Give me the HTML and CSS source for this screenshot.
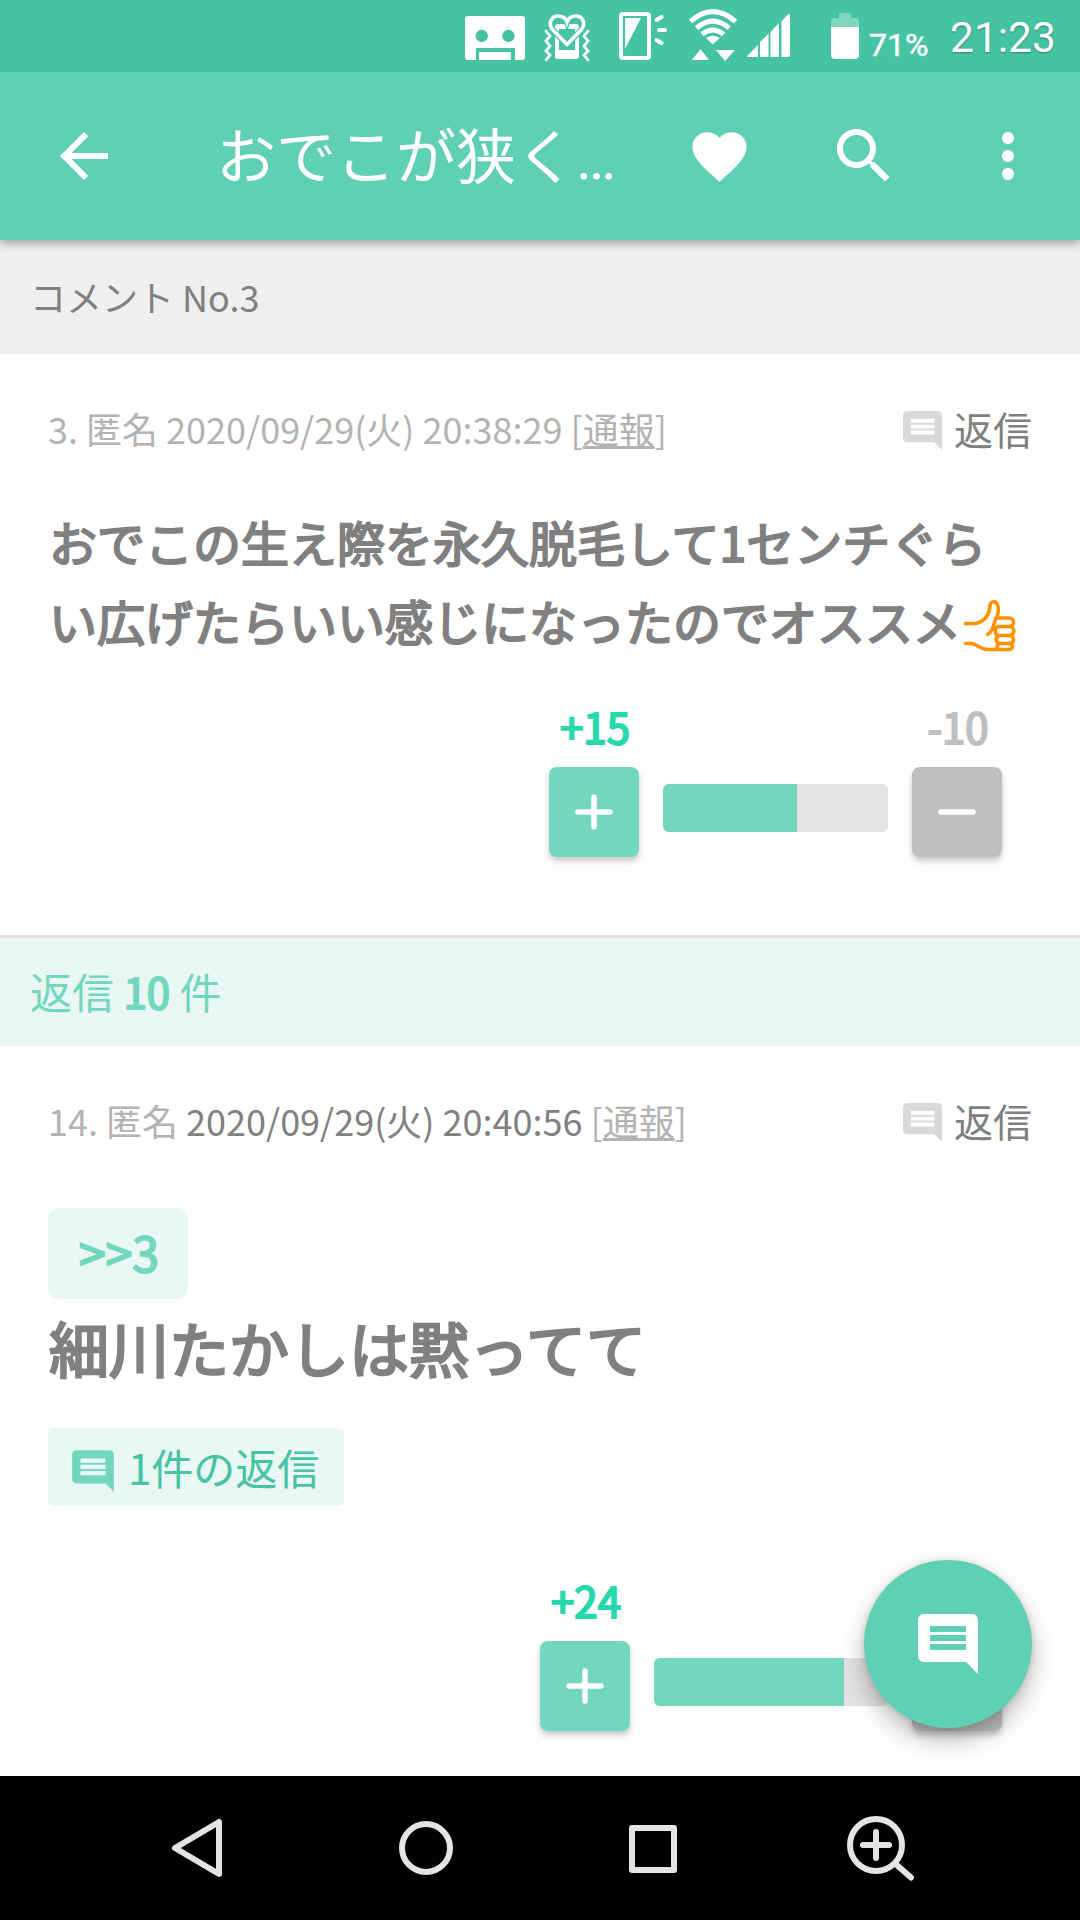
FILE: index.html
```html
<!DOCTYPE html>
<html lang="ja">
<head>
<meta charset="utf-8">
<title>コメント No.3</title>
<link rel="stylesheet" href="styles.css">
</head>
<body>
<svg class="defs" width="0" height="0">
  <symbol id="comment" viewBox="0 0 24 24"><path d="M21.99 4c0-1.1-.89-2-1.99-2H4c-1.1 0-2 .9-2 2v12c0 1.1.9 2 2 2h14l4 4-.01-18zM18 14H6v-2h12v2zm0-3H6V9h12v2zm0-3H6V6h12v2z"/></symbol>
  <symbol id="plus" viewBox="0 0 90 90"><path d="M29 45H61M45 30V60" stroke="#fff" stroke-width="5.500" stroke-linecap="round"/></symbol>
  <symbol id="minus" viewBox="0 0 90 90"><path d="M29 45H61" stroke="#fff" stroke-width="5.500" stroke-linecap="round"/></symbol>
</svg>
<div class="screen">
  <header class="status">
    <svg class="robot" width="60" height="46" viewBox="465 15 60 46"><path fill="#fff" fill-rule="evenodd" d="M468 16H522Q525 16 525 19V57Q525 60 522 60H515V48H476V60H468Q465 60 465 57V19Q465 16 468 16ZM481.700 29.800a6.200 6.200 0 1 0 .1 0ZM508.400 29.800a6.200 6.200 0 1 0 .1 0Z"/><path fill="#fff" d="M479 52H511V60H479Z"/></svg>
    <svg class="manner" width="48" height="50" viewBox="543 12 48 50"><rect x="555" y="24" width="24" height="35" rx="3" fill="#fff"/><path d="M559 29H575V50H559Z" fill="#46c3a2"/><path d="M567 44.500L553 30C547 23 552 16 558 16C563 16 566 19 567 22C568 19 571 16 576 16C582 16 587 23 581 30Z" fill="none" stroke="#46c3a2" stroke-width="6"/><path d="M567 44.500L553 30C547 23 552 16 558 16C563 16 566 19 567 22C568 19 571 16 576 16C582 16 587 23 581 30Z" fill="none" stroke="#fff" stroke-width="3.600"/><path d="M546 31L550 36L546 41L550 46L546 51L550 55L546 60M588 31L584 36L588 41L584 46L588 51L584 55L588 60" fill="none" stroke="#fff" stroke-width="2.800" stroke-linecap="round"/></svg>
    <svg class="flash" width="50" height="50" viewBox="618 11 50 50"><rect x="621" y="14" width="28" height="44" rx="2" fill="none" stroke="#fff" stroke-width="4"/><path d="M625 18H641L625 49Z" fill="#fff"/><path d="M656.500 20L661.500 17M659 30H665M656.500 40L661.500 43" stroke="#fff" stroke-width="4" stroke-linecap="round"/></svg>
    <svg class="wifi" width="48" height="54" viewBox="689 8 48 54"><path d="M712.800 44.500L706 38Q712.800 33.500 719.600 38Z" fill="#fff"/><g fill="none" stroke="#fff" stroke-width="5"><path d="M690.500 21.500Q712.800 1.800 735.500 21.500"/><path d="M696.500 28.200Q712.800 14.200 729.200 28.200"/><path d="M702 34.300Q712.800 25.700 723.800 34.300"/></g><path d="M692 60L700.500 49L709 60ZM716 50H735L725 61Z" fill="#fff"/></svg>
    <svg class="signal" width="44" height="46" viewBox="747 13 44 46"><path fill="#fff" d="M758 45V57H748Q746.500 57 748 55ZM760 42L768.500 33.500V57H760ZM770.500 32L779 23V57H770.500ZM781.500 21L788 14.500Q790 13 790 16V55Q790 57 788 57H781.500Z"/></svg>
    <svg class="battery" width="28" height="48" viewBox="831 12 28 48"><path fill="#7fd7c0" d="M840 13H850Q851 13 851 14V18H856Q859 18 859 21V28H831V21Q831 18 834 18H839V14Q839 13 840 13Z"/><path fill="#fff" d="M831 27H859V55Q859 59 855 59H835Q831 59 831 55Z"/></svg>
    <span class="percent">71%</span>
    <span class="clock">21:23</span>
  </header>
  <div class="appbar">
    <svg class="back" width="72" height="72" viewBox="0 0 24 24"><path d="M20 11H7.830l5.590-5.590L12 4l-8 8 8 8 1.410-1.410L7.830 13H20v-2z"/></svg>
    <h1 class="title">おでこが狭く<span class="dots">…</span></h1>
    <div class="action"><svg class="heart" width="65" height="65" viewBox="0 0 24 24"><path d="M12 21.350l-1.450-1.320C5.400 15.360 2 12.280 2 8.500 2 5.420 4.420 3 7.500 3c1.740 0 3.410.81 4.500 2.090C13.090 3.810 14.760 3 16.500 3 19.580 3 22 5.420 22 8.500c0 3.780-3.400 6.860-8.550 11.540L12 21.350z"/></svg></div>
    <div class="action"><svg width="72" height="72" viewBox="0 0 24 24"><path d="M15.500 14h-.79l-.28-.27C15.410 12.590 16 11.110 16 9.500 16 5.910 13.090 3 9.500 3S3 5.910 3 9.500 5.910 16 9.500 16c1.610 0 3.090-.59 4.230-1.570l.27.28v.79l5 4.990L20.490 19l-4.990-5zm-6 0C7.010 14 5 11.990 5 9.500S7.010 5 9.500 5 14 7.010 14 9.500 11.990 14 9.500 14z"/></svg></div>
    <div class="action"><svg width="72" height="72" viewBox="0 0 24 24"><path d="M12 8c1.100 0 2-.9 2-2s-.9-2-2-2-2 .9-2 2 .9 2 2 2zm0 2c-1.100 0-2 .9-2 2s.9 2 2 2 2-.9 2-2-.9-2-2-2zm0 6c-1.100 0-2 .9-2 2s.9 2 2 2 2-.9 2-2-.9-2-2-2z"/></svg></div>
  </div>
  <main class="content">
    <div class="band">コメント No.3</div>
    <article class="comment first">
      <div class="meta">
        <span>3. 匿名 2020/09/29(火) 20:38:29 [<u>通報</u>]</span>
        <span class="reply"><svg width="47" height="47"><use href="#comment"/></svg>返信</span>
      </div>
      <p class="body">おでこの生え際を永久脱毛して1センチぐら<br>い広げたらいい感じになったのでオススメ<svg class="thumb" width="54" height="54" viewBox="963 598 54 54"><g fill="none" stroke="#ff9100" stroke-width="3.500" stroke-linecap="round" stroke-linejoin="round"><path d="M965.500 623.500H975C984 622 989 616 990 606C990 601 996 600 998 606C999 611 998 615 996 618H1009C1015 618 1015 626 1009 626.500C1015.500 627 1015.500 635 1009 635.500C1015 636 1015 643 1009 643.500C1014 644 1013 649.500 1009 649.500H987C980 649.500 977 643.500 971 643.500H965.500"/><path d="M996 618C993 627 992 632 987.500 634.500M1009 626.500H999C994 627 994 635 999 635.500H1009M999 635.500C995 637 995 643 1000 643.500H1009M1000 643.500C996 644 996 649.500 1000 649.500"/></g></svg></p>
      <div class="votes">
        <div class="vote"><b class="up">+15</b><div class="btn green"><svg width="90" height="90"><use href="#plus"/></svg></div></div>
        <div class="bar short"><div class="fill" style="width:59.6%"></div></div>
        <div class="vote"><b class="down">-10</b><div class="btn grey"><svg width="90" height="90"><use href="#minus"/></svg></div></div>
      </div>
    </article>
    <div class="replies">返信 <b>10</b> 件</div>
    <article class="comment second">
      <div class="meta">
        <span>14. 匿名 <span class="dark">2020/09/29(火) 20:40:56</span> [<u>通報</u>]</span>
        <span class="reply"><svg width="47" height="47"><use href="#comment"/></svg>返信</span>
      </div>
      <div class="anchor">&gt;&gt;3</div>
      <p class="body large">細川たかしは黙ってて</p>
      <div class="thread"><svg width="50" height="50"><use href="#comment"/></svg><span>1件の返信</span></div>
      <div class="votes">
        <div class="vote"><b class="up">+24</b><div class="btn green"><svg width="90" height="90"><use href="#plus"/></svg></div></div>
        <div class="bar"><div class="fill" style="width:81.2%"></div></div>
        <div class="vote"><div class="btn grey"><svg width="90" height="90"><use href="#minus"/></svg></div></div>
      </div>
    </article>
  </main>
  <div class="fab"><svg width="72" height="72"><use href="#comment"/></svg></div>
  <nav class="nav">
    <svg width="1080" height="144" viewBox="0 1776 1080 144"><g fill="none" stroke="#e4e4e4" stroke-width="6" stroke-linejoin="round" stroke-linecap="round"><path d="M219 1822V1874L175 1848Z"/><circle cx="426" cy="1848" r="24"/><rect x="632" y="1828" width="42" height="42"/><circle cx="876" cy="1845" r="26"/><path d="M863 1845H889M876 1832V1858M895 1863.500L911 1877.500"/></g></svg>
  </nav>
</div>
</body>
</html>
```
FILE: styles.css
```css
* { box-sizing: border-box; }
body {
  margin: 0;
  background: #fff;
  font-family: "Noto Sans CJK JP", sans-serif;
  color: #808080;
}
.defs { position: absolute; }
svg { display: block; flex: none; }
.screen {
  position: relative;
  width: 1080px;
  height: 1920px;
  display: flex;
  flex-direction: column;
  overflow: hidden;
}
.status {
  position: relative;
  z-index: 2;
  height: 72px;
  flex: none;
  background: #46c3a2;
  display: flex;
  align-items: flex-start;
  padding-left: 465px;
  color: #fff;
  font-family: Roboto, sans-serif;
}
.robot { margin-top: 15px; }
.manner { margin: 12px 0 0 18px; }
.flash { margin: 11px 0 0 27px; }
.wifi { margin: 8px 0 0 21px; }
.signal { margin: 13px 0 0 10px; }
.battery { margin: 12px 0 0 40px; }
.percent {
  margin: 27px 0 0 10px;
  width: 62px;
  font-size: 32px;
  line-height: 36px;
  -webkit-text-stroke: .5px currentColor;
}
.clock {
  margin: 13px 0 0 19px;
  font-size: 42.5px;
  line-height: 50px;
  text-shadow: 0 1px 2px rgba(0, 0, 0, .35);
}
.appbar {
  position: relative;
  height: 168px;
  flex: none;
  background: #5fd0b5;
  display: flex;
  align-items: center;
  padding-left: 48px;
  box-shadow: 0 3px 10px rgba(0, 0, 0, .36);
  z-index: 1;
}
.appbar svg { fill: #fff; }
.title {
  margin: 0 0 0 96px;
  width: 432px;
  color: #fff;
  font-size: 60px;
  font-weight: 400;
  line-height: 84px;
  white-space: nowrap;
}
.dots { font-family: Roboto, sans-serif; }
.action { width: 144px; display: flex; justify-content: center; }
.heart { margin-right: 1px; }
.content { flex: 1; min-height: 0; overflow: hidden; }
.band {
  height: 114px;
  padding: 0 30px;
  background: #efefef;
  font-size: 36px;
  line-height: 112px;
}
.comment { padding: 48px 48px 0; }
.first { height: 584px; border-bottom: 3px solid #e3e3e3; }
.meta {
  height: 54px;
  display: flex;
  align-items: center;
  justify-content: space-between;
  color: #b3b3b3;
  font-size: 36px;
  line-height: 52px;
  white-space: nowrap;
}
.meta > span { height: 54px; }
.dark { color: #808080; }
.reply { display: flex; gap: 8px; color: #808080; font-size: 39px; }
.reply svg { fill: #d9d9d9; margin-top: 5px; }
.body {
  margin: 46px 0 0;
  padding-left: 1px;
  font-size: 48px;
  line-height: 79px;
  white-space: nowrap;
  -webkit-text-stroke: 2px currentColor;
}
.thumb { display: inline-block; margin-left: 2px; vertical-align: -11px; }
.votes {
  display: flex;
  align-items: flex-end;
  justify-content: flex-end;
  gap: 24px;
  margin-top: 35px;
  padding-right: 30px;
}
.vote { width: 90px; display: flex; flex-direction: column; align-items: center; gap: 12px; }
.vote b {
  height: 60px;
  padding-left: 2px;
  font-size: 42px;
  font-weight: 400;
  line-height: 62px;
  -webkit-text-stroke: 2px currentColor;
}
.up { color: #26d9ad; }
.down { color: #bfbfbf; }
.btn { width: 90px; height: 90px; border-radius: 8px; box-shadow: 0 4px 6px rgba(0, 0, 0, .22); }
.green, .fill { background: #73d7be; }
.grey { background: #bfbfbf; }
.bar {
  width: 234px;
  height: 48px;
  margin-bottom: 25px;
  border-radius: 6px;
  background: #e3e3e3;
  overflow: hidden;
}
.short { width: 225px; }
.fill { height: 100%; }
.replies {
  height: 108px;
  padding: 0 30px;
  background: #e9f8f5;
  color: #73d7be;
  font-size: 42px;
  line-height: 106px;
}
.replies b { font-weight: 400; -webkit-text-stroke: 2px currentColor; }
.anchor {
  width: 140px;
  height: 91px;
  margin-top: 60px;
  padding-left: 2px;
  border-radius: 11px;
  background: #e9f8f5;
  color: #73d7be;
  font-size: 48px;
  line-height: 87px;
  text-align: center;
  -webkit-text-stroke: 2px currentColor;
}
.large { margin: 0; font-size: 60px; line-height: 96px; -webkit-text-stroke-width: 2.5px; }
.thread {
  width: 296px;
  height: 78px;
  margin-top: 33px;
  padding-left: 20px;
  border-radius: 5px;
  background: #e9f8f5;
  color: #46c3a2;
  display: flex;
  gap: 10px;
  font-size: 42px;
  line-height: 77px;
  white-space: nowrap;
}
.thread svg { fill: #73d7be; margin-top: 18px; }
.second .votes { margin-top: 63px; }
.fab {
  position: absolute;
  left: 864px;
  top: 1560px;
  width: 168px;
  height: 168px;
  border-radius: 50%;
  background: #5fd0b5;
  display: flex;
  align-items: center;
  justify-content: center;
  box-shadow: 0 12px 24px rgba(0, 0, 0, .28), 0 0 6px rgba(0, 0, 0, .12);
}
.fab svg { fill: #fff; }
.nav { position: relative; height: 144px; flex: none; background: #000; }
```
